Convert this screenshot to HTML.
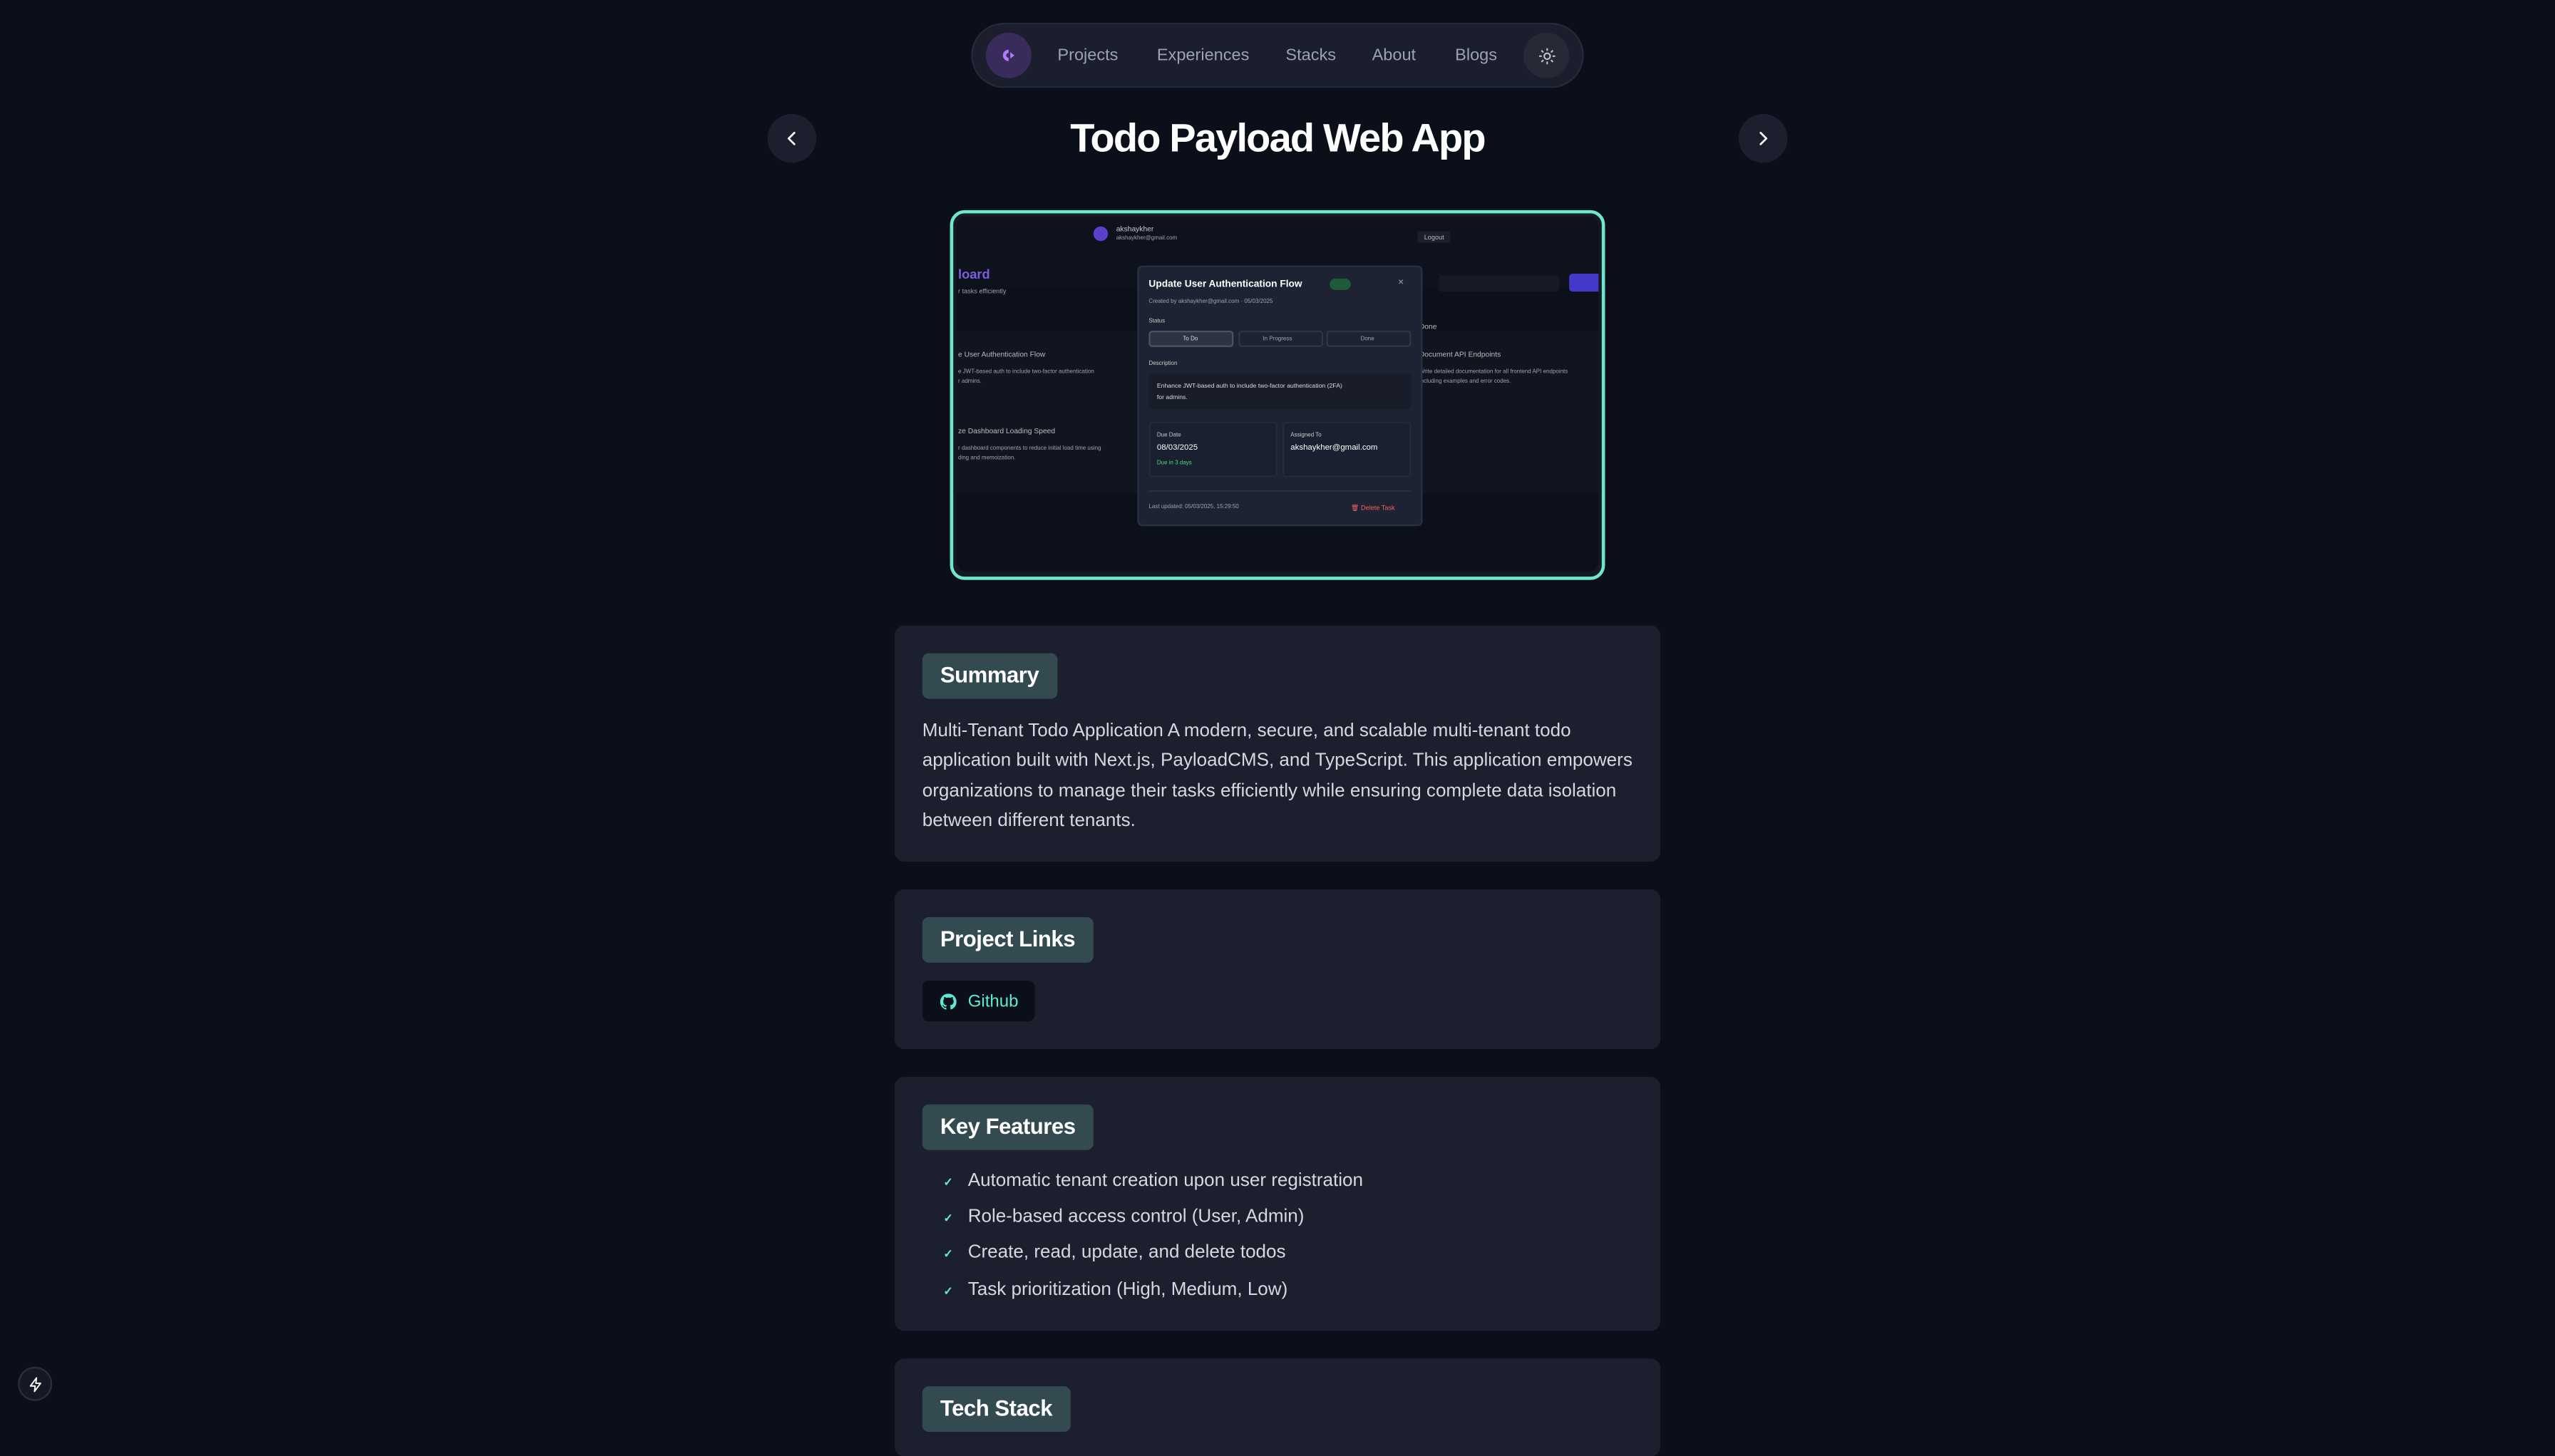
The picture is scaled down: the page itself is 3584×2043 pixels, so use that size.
<!DOCTYPE html>
<html><head><meta charset="utf-8"><style>
*{margin:0;padding:0;box-sizing:border-box}
html,body{width:3584px;height:1990px;overflow:hidden;background:#0b0f1a}
#s{position:absolute;left:0;top:0;width:1568px;height:871px;transform:scale(2.285714);transform-origin:0 0;font-family:"Liberation Sans",sans-serif;color:#e5e7eb}
.a{position:absolute}
.nav{left:596px;top:14px;width:376px;height:40px;border-radius:20px;background:#1b1e2c;border:1px solid #252a38}
.nl{top:29px;font-size:10.3px;color:#9ca3af;white-space:nowrap}
.circ{border-radius:50%;background:#1c1f2e;display:flex;align-items:center;justify-content:center}
.card{left:549px;width:470px;background:#1c1f2e;border-radius:6px}
.pill{left:566px;height:28px;background:#334a50;border-radius:4px;color:#fff;font-weight:bold;font-size:13.6px;letter-spacing:-0.2px;line-height:28px;padding:0 11px;white-space:nowrap}
.txt{left:566px;font-size:11.4px;line-height:18.3px;color:#d6d8de;white-space:nowrap}
.li{left:594px;font-size:11.4px;color:#d6d8de;white-space:nowrap}
.ck{left:579px;font-size:7px;color:#5eead4;font-weight:bold}
.sm{position:absolute;white-space:nowrap;color:#9ca3af}
</style></head><body><div id="s">
<div class="a nav"></div>
<div class="a circ" style="left:605px;top:20px;width:28px;height:28px;background:#392b5c"><svg width="8" height="8" viewBox="0 0 8 8"><path d="M4 0.5A3.5 3.5 0 1 0 4 7.5L4 5.5A1.5 1.5 0 0 1 4 2.5Z" fill="#b07cff"/><path d="M5 2L7.5 4L5 6Z" fill="#b07cff"/></svg></div>
<div class="a nl" style="left:649px">Projects</div>
<div class="a nl" style="left:710px">Experiences</div>
<div class="a nl" style="left:789px">Stacks</div>
<div class="a nl" style="left:842px">About</div>
<div class="a nl" style="left:893px">Blogs</div>
<div class="a circ" style="left:935px;top:20px;width:28px;height:28px;background:#262a37"><svg width="11" height="11" viewBox="0 0 24 24" fill="none" stroke="#c0c4cc" stroke-width="2" stroke-linecap="round"><circle cx="12" cy="12" r="4"/><path d="M12 2v2M12 20v2M4.9 4.9l1.4 1.4M17.7 17.7l1.4 1.4M2 12h2M20 12h2M4.9 19.1l1.4-1.4M17.7 6.3l1.4-1.4"/></svg></div>

<div class="a circ" style="left:471px;top:70px;width:30px;height:30px"><svg width="12" height="12" viewBox="0 0 24 24" fill="none" stroke="#fff" stroke-width="2.4" stroke-linecap="round" stroke-linejoin="round"><path d="M15 5l-7 7 7 7"/></svg></div>
<div class="a circ" style="left:1067px;top:70px;width:30px;height:30px"><svg width="12" height="12" viewBox="0 0 24 24" fill="none" stroke="#fff" stroke-width="2.4" stroke-linecap="round" stroke-linejoin="round"><path d="M9 5l7 7-7 7"/></svg></div>
<div class="a" style="left:0;width:1568px;top:72px;text-align:center;font-size:24.5px;font-weight:bold;color:#fff;letter-spacing:-0.8px">Todo Payload Web App</div>

<div class="a" style="left:583px;top:129px;width:402px;height:227px;border:2px solid #6ee7d0;border-radius:9px;background:#151924;overflow:hidden">
 <div class="a" style="left:2px;top:2px;width:394px;height:218px;background:#0c101a;border-radius:6px;overflow:hidden">
  <div class="a" style="left:0;top:0;width:394px;height:44px;background:#0e121c"></div>
  <div class="a" style="left:84px;top:6px;width:9px;height:9px;border-radius:50%;background:#5b3fc9"></div>
  <div class="sm" style="left:98px;top:5px;font-size:4.5px;color:#ccc">akshaykher</div>
  <div class="sm" style="left:98px;top:11px;font-size:3.5px">akshaykher@gmail.com</div>
  <div class="sm" style="left:283px;top:9px;font-size:4px;background:#1a1f2a;padding:1px 4px;color:#bbb">Logout</div>
  <div class="sm" style="left:1px;top:31px;font-size:8px;color:#7c5ce0;font-weight:bold">loard</div>
  <div class="sm" style="left:1px;top:43px;font-size:4px">r tasks efficiently</div>
  <div class="a" style="left:296px;top:36px;width:74px;height:10px;background:#151a26;border-radius:2px"></div>
  <div class="a" style="left:376px;top:35px;width:20px;height:11px;background:#4338ca;border-radius:2px"></div>
  <div class="a" style="left:0;top:70px;width:394px;height:100px;background:#11151f"></div>
  <div class="sm" style="left:1px;top:82px;font-size:4.5px;color:#bbb">e User Authentication Flow</div>
  <div class="sm" style="left:1px;top:92px;font-size:3.5px;line-height:6px">e JWT-based auth to include two-factor authentication<br>r admins.</div>
  <div class="sm" style="left:1px;top:129px;font-size:4.5px;color:#bbb">ze Dashboard Loading Speed</div>
  <div class="sm" style="left:1px;top:139px;font-size:3.5px;line-height:6px">r dashboard components to reduce initial load time using<br>ding and memoization.</div>
  <div class="sm" style="left:284px;top:65px;font-size:4.5px;color:#bbb">Done</div>
  <div class="sm" style="left:284px;top:82px;font-size:4.5px;color:#bbb">Document API Endpoints</div>
  <div class="sm" style="left:284px;top:92px;font-size:3.5px;line-height:6px">Write detailed documentation for all frontend API endpoints<br>including examples and error codes.</div>
  <div class="a" style="left:111px;top:30px;width:175px;height:160px;background:#1d2332;border:1px solid #2a3142;border-radius:3px">
   <div class="sm" style="left:6px;top:8px;font-size:6px;color:#fff;font-weight:bold">Update User Authentication Flow</div>
   <div class="a" style="left:117px;top:7px;width:13px;height:7px;border-radius:4px;background:#1f5a3a"></div>
   <div class="sm" style="left:159px;top:7px;font-size:6px">×</div>
   <div class="sm" style="left:6px;top:19px;font-size:3.5px">Created by akshaykher@gmail.com · 05/03/2025</div>
   <div class="sm" style="left:6px;top:31px;font-size:3.5px;color:#ccc">Status</div>
   <div class="a" style="left:6px;top:39px;width:52px;height:10px;border:1px solid #4a5263;background:#2c3342;border-radius:2px"></div>
   <div class="a" style="left:61px;top:39px;width:52px;height:10px;border:1px solid #2f3646;border-radius:2px"></div>
   <div class="a" style="left:115px;top:39px;width:52px;height:10px;border:1px solid #2f3646;border-radius:2px"></div>
   <div class="sm" style="left:27px;top:42px;font-size:3.5px;color:#ddd">To Do</div>
   <div class="sm" style="left:76px;top:42px;font-size:3.5px">In Progress</div>
   <div class="sm" style="left:136px;top:42px;font-size:3.5px">Done</div>
   <div class="sm" style="left:6px;top:57px;font-size:3.5px;color:#ccc">Description</div>
   <div class="a" style="left:6px;top:65px;width:161px;height:22px;background:#181d29;border-radius:2px"></div>
   <div class="sm" style="left:11px;top:70px;font-size:3.8px;color:#ddd;line-height:7px">Enhance JWT-based auth to include two-factor authentication (2FA)<br>for admins.</div>
   <div class="a" style="left:6px;top:95px;width:79px;height:34px;background:#1a2030;border:1px solid #242b3a;border-radius:2px"></div>
   <div class="a" style="left:88px;top:95px;width:79px;height:34px;background:#1a2030;border:1px solid #242b3a;border-radius:2px"></div>
   <div class="sm" style="left:11px;top:101px;font-size:3.5px;color:#ccc">Due Date</div>
   <div class="sm" style="left:11px;top:108px;font-size:5px;color:#fff">08/03/2025</div>
   <div class="sm" style="left:11px;top:118px;font-size:3.5px;color:#4ade80">Due in 3 days</div>
   <div class="sm" style="left:93px;top:101px;font-size:3.5px;color:#ccc">Assigned To</div>
   <div class="sm" style="left:93px;top:108px;font-size:5px;color:#fff">akshaykher@gmail.com</div>
   <div class="a" style="left:6px;top:137px;width:161px;height:1px;background:#2a3142"></div>
   <div class="sm" style="left:6px;top:145px;font-size:3.5px">Last updated: 05/03/2025, 15:29:50</div>
   <div class="sm" style="left:130px;top:145px;font-size:4px;color:#ef6060">🗑 Delete Task</div>
  </div>
 </div>
</div>

<div class="a card" style="top:384px;height:145px"></div>
<div class="a pill" style="top:401px">Summary</div>
<div class="a txt" style="top:440px">Multi-Tenant Todo Application A modern, secure, and scalable multi-tenant todo<br>application built with Next.js, PayloadCMS, and TypeScript. This application empowers<br>organizations to manage their tasks efficiently while ensuring complete data isolation<br>between different tenants.</div>

<div class="a card" style="top:546px;height:98px"></div>
<div class="a pill" style="top:563px">Project Links</div>
<div class="a" style="left:566px;top:602px;width:69px;height:25px;background:#0b0f1a;border-radius:4px"></div>
<svg class="a" style="left:577px;top:610px" width="10" height="10" viewBox="0 0 16 16" fill="#5eead4"><path d="M8 0C3.6 0 0 3.6 0 8c0 3.5 2.3 6.5 5.5 7.6.4.1.5-.2.5-.4v-1.4c-2.2.5-2.7-1-2.7-1-.4-.9-.9-1.200-.9-1.200-.7-.5.1-.5.1-.5.8.1 1.200.8 1.200.8.7 1.3 1.9.9 2.4.7.1-.5.3-.9.5-1.1-1.8-.2-3.6-.9-3.6-4 0-.9.3-1.6.8-2.1-.1-.2-.4-1 .1-2.1 0 0 .7-.2 2.2.8.6-.2 1.3-.3 2-.3s1.4.1 2 .3c1.5-1 2.2-.8 2.2-.8.4 1.1.2 1.9.1 2.1.5.6.8 1.3.8 2.1 0 3.1-1.9 3.7-3.7 3.9.3.3.6.8.6 1.5v2.2c0 .2.1.5.6.4C13.7 14.5 16 11.5 16 8c0-4.4-3.6-8-8-8z"/></svg>
<div class="a" style="left:594px;top:609px;font-size:10.5px;color:#5eead4">Github</div>

<div class="a card" style="top:661px;height:156px"></div>
<div class="a pill" style="top:678px">Key Features</div>
<div class="a ck" style="top:722px">✓</div><div class="a li" style="top:719px">Automatic tenant creation upon user registration</div>
<div class="a ck" style="top:744px">✓</div><div class="a li" style="top:741px">Role-based access control (User, Admin)</div>
<div class="a ck" style="top:766px">✓</div><div class="a li" style="top:763px">Create, read, update, and delete todos</div>
<div class="a ck" style="top:789px">✓</div><div class="a li" style="top:786px">Task prioritization (High, Medium, Low)</div>

<div class="a card" style="top:834px;height:60px"></div>
<div class="a pill" style="top:851px">Tech Stack</div>

<div class="a circ" style="left:11px;top:839px;width:21px;height:21px;background:#151923;border:1px solid #2a2f3c"><svg width="10" height="10" viewBox="0 0 24 24" fill="none" stroke="#fff" stroke-width="2" stroke-linejoin="round"><path d="M13 2L4 14h7l-1 8 9-12h-7z"/></svg></div>
</div></body></html>
